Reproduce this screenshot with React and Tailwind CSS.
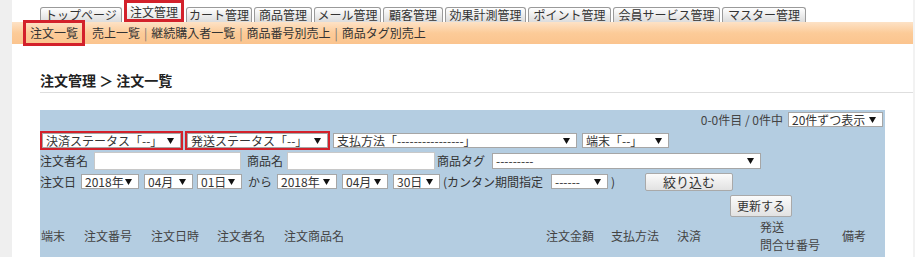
import React from "react";

const tabs = [
  { label: "トップページ", w: "w-[82px]" },
  { label: "注文管理", w: "w-[60px]", active: true },
  { label: "カート管理", w: "w-[66px]" },
  { label: "商品管理", w: "w-[58px]" },
  { label: "メール管理", w: "w-[67px]" },
  { label: "顧客管理", w: "w-[60px]" },
  { label: "効果計測管理", w: "w-[81px]" },
  { label: "ポイント管理", w: "w-[83px]" },
  { label: "会員サービス管理", w: "w-[107px]" },
  { label: "マスター管理", w: "w-[84px]" },
];

function Arrow() {
  return (
    <svg width="7" height="6" viewBox="0 0 7 6" className="shrink-0">
      <path d="M0 0 L7 0 L3.5 6 Z" fill="#111" />
    </svg>
  );
}

function Select({ text, className = "" }) {
  return (
    <div
      className={
        "h-[15px] bg-white border border-[#a6a6a6] flex items-center justify-between pl-[3px] pr-[6px] text-[12px] leading-none text-[#333] whitespace-nowrap overflow-hidden " +
        className
      }
    >
      <span>{text}</span>
      <Arrow />
    </div>
  );
}

function Button({ children, className = "" }) {
  return (
    <div
      className={
        "flex items-center justify-center bg-gradient-to-b from-[#fbfbfb] to-[#e2e2e2] border border-[#a9a9a9] rounded-[2px] text-[#333] leading-none " +
        className
      }
    >
      {children}
    </div>
  );
}

export default function App() {
  return (
    <div
      className="flex h-[257px] w-[915px] overflow-hidden bg-white text-[#333]"
      style={{ fontFamily: '"Noto Sans CJK JP", "Noto Sans", sans-serif' }}
    >
      <div className="w-[12px] shrink-0 bg-[#efefef]" />
      <div className="w-[901px] shrink-0 flex flex-col">
        {/* main tabs */}
        <div className="h-[22px] flex items-end gap-[2px] pl-[28px]">
          {tabs.map((t) =>
            t.active ? (
              <div
                key={t.label}
                className={`${t.w} h-[22px] border-[3px] border-[#d3212b] flex items-end justify-center pb-0`}
              >
                <div className="w-full h-[14px] bg-gradient-to-b from-white to-[#e6e6e6] text-[12px] leading-[14px] text-center">
                  {t.label}
                </div>
              </div>
            ) : (
              <div
                key={t.label}
                className={`${t.w} h-[15px] bg-gradient-to-b from-white to-[#dcdcdc] border border-b-0 border-[#9a9a9a] rounded-t-[3px] text-[12px] leading-[14px] text-center`}
              >
                {t.label}
              </div>
            )
          )}
        </div>

        {/* sub menu */}
        <div className="h-[22px] flex items-center bg-gradient-to-b from-[#fde2c6] via-[#fccb98] to-[#fbc48e] pl-[11px] text-[12px]">
          <div className="h-[26px] w-[62px] border-[3px] border-[#d3212b] flex items-center justify-center">
            注文一覧
          </div>
          <div className="ml-[7px] flex items-center whitespace-nowrap">
            <span>売上一覧</span>
            <span className="mx-[4px] text-[#777]">|</span>
            <span>継続購入者一覧</span>
            <span className="mx-[4px] text-[#777]">|</span>
            <span>商品番号別売上</span>
            <span className="mx-[4px] text-[#777]">|</span>
            <span>商品タグ別売上</span>
          </div>
        </div>

        {/* heading */}
        <div className="mt-[26px] ml-[28px] w-[873px] border-b border-[#dedede] pb-[2px]">
          <h1 className="text-[14px] font-bold leading-[20px] text-[#222]">注文管理 ＞ 注文一覧</h1>
        </div>

        {/* search panel */}
        <div className="mt-[17px] ml-[28px] w-[845px] flex-1 bg-[#b4cde1] flex flex-col text-[12px]">
          <div className="mt-[2px] h-[15px] flex items-center justify-end pr-[2px]">
            <span className="mr-[5px] text-[#444]">0-0件目 / 0件中</span>
            <Select text="20件ずつ表示" className="w-[95px]" />
          </div>

          <div className="mt-[4px] flex items-center">
            <div className="border-2 border-[#d3212b] w-[143px]">
              <Select text="決済ステータス「--」" className="w-full" />
            </div>
            <div className="ml-[2px] border-2 border-[#d3212b] w-[145px]">
              <Select text="発送ステータス「--」" className="w-full" />
            </div>
            <Select text="支払方法「----------------」" className="ml-[3px] w-[244px]" />
            <Select text="端末「--」" className="ml-[5px] w-[87px]" />
          </div>

          <div className="mt-[2px] h-[18px] flex items-center">
            <span className="w-[54px]">注文者名</span>
            <div className="w-[147px] h-[18px] bg-white border border-[#c8c8c8]" />
            <span className="ml-[6px] w-[40px]">商品名</span>
            <div className="w-[148px] h-[18px] bg-white border border-[#c8c8c8]" />
            <span className="ml-[2px] w-[55px]">商品タグ</span>
            <Select text="---------" className="w-[269px] h-[16px]" />
          </div>

          <div className="mt-[2px] h-[19px] flex items-center whitespace-nowrap">
            <span className="w-[41px]">注文日</span>
            <Select text="2018年" className="w-[58px]" />
            <Select text="04月" className="ml-[5px] w-[49px]" />
            <Select text="01日" className="ml-[4px] w-[45px]" />
            <span className="ml-[6px] w-[29px]">から</span>
            <Select text="2018年" className="w-[60px]" />
            <Select text="04月" className="ml-[5px] w-[46px]" />
            <Select text="30日" className="ml-[5px] w-[47px]" />
            <span className="ml-[3px] w-[108px]">(カンタン期間指定</span>
            <Select text="------" className="w-[57px]" />
            <span className="ml-[3px]">)</span>
            <Button className="ml-[30px] w-[88px] h-[18px] text-[13px]">絞り込む</Button>
          </div>

          <div className="mt-[4px] flex">
            <Button className="ml-[690px] w-[62px] h-[22px] text-[12px]">更新する</Button>
          </div>

          <div className="mt-[1px] h-[36px] flex items-center text-[#444] whitespace-nowrap">
            <span className="w-[44px] pl-[1px]">端末</span>
            <span className="w-[67px]">注文番号</span>
            <span className="w-[66px]">注文日時</span>
            <span className="w-[67px]">注文者名</span>
            <span className="w-[262px]">注文商品名</span>
            <span className="w-[65px]">注文金額</span>
            <span className="w-[66px]">支払方法</span>
            <span className="w-[83px]">決済</span>
            <span className="w-[82px] leading-[18px]">
              発送
              <br />
              問合せ番号
            </span>
            <span>備考</span>
          </div>
        </div>
      </div>
      <div className="flex-1 bg-[#f2f2f2]" />
    </div>
  );
}
